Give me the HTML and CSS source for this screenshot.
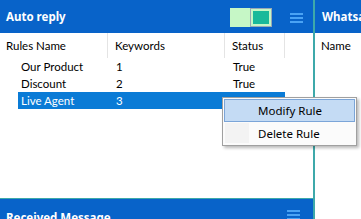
FILE: index.html
```html
<!DOCTYPE html>
<html>
<head>
<meta charset="utf-8">
<link rel="stylesheet" href="styles.css">
</head>
<body>
<div class="app">
  <div class="left">
    <div class="panel">
      <div class="header">
        <span class="title">Auto reply</span>
        <div class="tools">
          <div class="toggle"><span class="toggle-off"></span><span class="toggle-on"><span class="knob"></span></span></div>
          <div class="burger"><i></i><i></i><i></i></div>
        </div>
      </div>
      <div class="cols">
        <div class="col c1">Rules Name</div>
        <div class="col c2">Keywords</div>
        <div class="col c3">Status</div>
      </div>
      <div class="rows">
        <div class="row"><span class="cell c1">Our Product</span><span class="cell c2">1</span><span class="cell c3">True</span></div>
        <div class="row"><span class="cell c1">Discount</span><span class="cell c2">2</span><span class="cell c3">True</span></div>
        <div class="row selected"><span class="cell c1">Live Agent</span><span class="cell c2">3</span><span class="cell c3">True</span></div>
      </div>
    </div>
    <div class="header bottom">
      <span class="title">Received Message</span>
      <div class="burger"><i></i><i></i><i></i></div>
    </div>
  </div>
  <div class="right">
    <div class="header rhead"><span class="title">Whatsapp Contacts</span></div>
    <div class="cols"><div class="col">Name</div></div>
  </div>
</div>
<div class="menu">
  <div class="item active"><span class="gutter"></span><span class="label">Modify Rule</span></div>
  <div class="item"><span class="gutter"></span><span class="label">Delete Rule</span></div>
</div>
</body>
</html>
```
FILE: styles.css
```css
html, body {
  margin: 0;
  padding: 0;
  width: 361px;
  height: 219px;
  overflow: hidden;
  background: #ffffff;
  font-family: "Lato", "Noto Sans", sans-serif;
  font-size: 11.5px;
  color: #000;
}
.app {
  display: flex;
  width: 361px;
  height: 219px;
}
.left {
  width: 313px;
  flex: none;
  display: flex;
  flex-direction: column;
  border-right: 2px solid #3ea9aa;
}
.panel {
  flex: 1;
  display: flex;
  flex-direction: column;
  border-bottom: 1px solid #3ea9aa;
}
.header {
  height: 33px;
  background: #0863c9;
  display: flex;
  align-items: center;
  justify-content: space-between;
  padding: 0 10px 0 6px;
  flex: none;
  box-sizing: border-box;
}
.title {
  color: #fff;
  font-family: "Noto Sans", sans-serif;
  font-weight: bold;
  font-size: 11.5px;
  white-space: nowrap;
}
.tools {
  display: flex;
  align-items: center;
  gap: 18px;
}
.toggle {
  display: flex;
  height: 19px;
  margin-top: 2px;
}
.toggle-off {
  width: 20px;
  background: #c6f7c6;
}
.toggle-on {
  width: 22px;
  box-sizing: border-box;
  background: #c6f7c6;
  border: 1px solid #9aa9b5;
  padding: 2px;
  display: flex;
}
.knob {
  flex: 1;
  background: #19b99a;
}
.burger {
  width: 13px;
  display: flex;
  flex-direction: column;
  gap: 2px;
  margin-top: 2px;
}
.burger i {
  display: block;
  height: 2px;
  background: #4aa3f4;
}
.cols {
  display: flex;
  height: 25px;
  flex: none;
}
.col {
  box-sizing: border-box;
  padding-left: 6px;
  display: flex;
  align-items: center;
  border-right: 1px solid #e4e4e4;
}
.cols .c1 { width: 108px; }
.cols .c2 { width: 117px; padding-left: 7px; }
.cols .c3 { width: 60px; padding-left: 7px; }
.rows {
  padding-left: 18px;
}
.row {
  display: flex;
  height: 17px;
  align-items: center;
  width: 267px;
}
.cell { white-space: nowrap; box-sizing: border-box; }
.rows .c1 { width: 90px; padding-left: 3px; }
.rows .c2 { width: 117px; padding-left: 8px; }
.rows .c3 { width: 60px; padding-left: 8px; }
.row.selected {
  background: #0a7bd6;
  color: #fff;
}
.bottom {
  height: 20px;
  align-items: flex-end;
  padding: 0 13px 0 6px;
  overflow: hidden;
}
.bottom .title {
  line-height: 14px;
  margin-bottom: -6px;
}
.bottom .burger {
  margin-bottom: -1px;
}
.right {
  flex: 1;
  overflow: hidden;
}
.rhead {
  padding-left: 7px;
}
.right .col {
  border-right: none;
  padding-left: 6px;
}
.menu {
  position: absolute;
  left: 222px;
  top: 97px;
  width: 135px;
  box-sizing: border-box;
  background: #fbfbfb;
  border: 1px solid #a0a0a0;
  padding: 1px;
  box-shadow: 2px 2px 3px rgba(0,0,0,0.28);
  font-family: "Noto Sans", sans-serif;
  font-size: 11.5px;
}
.item {
  display: flex;
  height: 22px;
  align-items: center;
  box-sizing: border-box;
  border: 1px solid transparent;
}
.item.active {
  background: #c4dbf4;
  border-color: #7ba5d8;
  height: 23px;
}
.gutter {
  width: 24px;
  align-self: stretch;
  background: #f3f3f3;
}
.item.active .gutter {
  background: transparent;
}
.label {
  padding-left: 9px;
}
```
